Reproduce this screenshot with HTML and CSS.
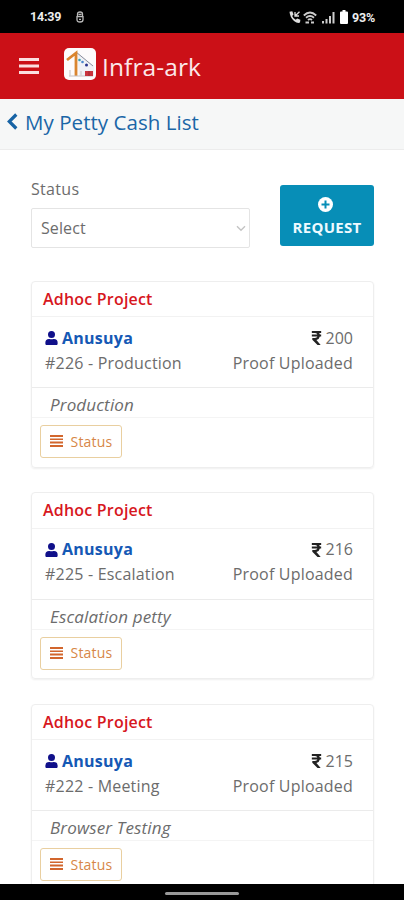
FILE: index.html
```
<!DOCTYPE html>
<html lang="en">
<head>
<meta charset="utf-8">
<title>Infra-ark</title>
<link rel="stylesheet" href="styles.css">
</head>
<body>
<svg width="0" height="0" class="defs">
  <symbol id="user" viewBox="0 0 448 512"><path d="M224 256a128 128 0 1 0 0-256 128 128 0 0 0 0 256zm90 32h-17a174 174 0 0 1-146 0h-17A134 134 0 0 0 0 422v42c0 27 21 48 48 48h352c27 0 48-21 48-48v-42a134 134 0 0 0-134-134z"/></symbol>
  <symbol id="rupee" viewBox="0 0 11 15"><path d="M.5 0h10v2.200H8.300q.6.700.8 1.600h1.400V6H9.100Q8.500 9 5.400 9.600L10 15H6.600L1 9.400V7.400h2.800Q6 7.400 6.500 6h-6V3.800h5.900Q5.700 2.200 3.800 2.200H.5z"/></symbol>
  <symbol id="bars" viewBox="0 0 13 12"><path d="M0 0h13v2H0zM0 3.400h13V5H0zM0 6.600h13v1.800H0zM0 10h13v2H0z"/></symbol>
</svg>
<div class="screen">
  <div class="statusbar">
    <span class="time">14:39</span>
    <svg class="notif" width="8" height="12" viewBox="0 0 8 12" fill="none" stroke="#bbb" stroke-width="1.300"><path d="M1.500 5.500V3q0-2 2.500-2t2.500 2v2.500M1 5.700h6v3Q7 11 4 11T1 8.700zM2.500 3.500h3M3 8.300h2"/></svg>
    <svg class="call" width="12" height="13" viewBox="0 0 12 13"><path fill="#ddd" d="M.5.8 3.300.3 4.500 3.500 3.200 5q1 2.500 3.500 3.700l1.500-1.300 3.200 1.300-.4 2.900Q8.500 12.700 5 10 1 6.500.5.800z"/><path d="M6 1v4h4M6.300 4.700 10.500.7" fill="none" stroke="#ddd" stroke-width="1.300"/></svg>
    <svg class="wifi" width="14" height="13" viewBox="0 0 14 13" fill="none" stroke="#ccc" stroke-width="1.800"><path d="M.8 4.500Q7-1.500 13.200 4.500M3 6.800q4-3.500 8 0M5 9q2-1.800 4 0M2.500 11.500H6M8 11.500h3"/></svg>
    <svg class="signal" width="13" height="13" viewBox="0 0 13 13" fill="#ccc"><path d="M0 10h2v2.500H0zM3.500 8h2v4.500h-2zM7 5h2v7.500H7zM10.500 1h2v11.500h-2z"/></svg>
    <svg class="battery" width="8" height="14" viewBox="0 0 8 14"><path fill="#fff" d="M2.500 0h3v1.500H7q1 0 1 1V13q0 1-1 1H1q-1 0-1-1V2.500q0-1 1-1h1.500z"/></svg>
    <span class="percent">93%</span>
  </div>
  <header class="topbar">
    <svg class="menu" width="20" height="16" viewBox="0 0 20 16" fill="#fbdfe0"><path d="M0 0h20v3H0zM0 6.500h20v3H0zM0 13h20v3H0z"/></svg>
    <svg class="logo" width="32" height="32" viewBox="0 0 32 32">
      <rect width="32" height="32" rx="5" fill="#fdfbfb"/>
      <path d="M13 4 30 18v10H15" fill="#f0f1f6"/>
      <path d="M12 4 29 18" stroke="#8b8e9b" stroke-width="1" fill="none"/>
      <path d="M3 12 12 5v23" fill="none" stroke="#da852f" stroke-width="2.800"/>
      <path d="M5 28h24" stroke="#c4c0c2" stroke-width="1"/>
      <path d="M6 22v6m11-5v5" stroke="#d5d1d1" stroke-width="1.400"/>
      <circle cx="15.500" cy="12" r="1.300" fill="#39a4b4"/><circle cx="18.500" cy="14" r="1.300" fill="#4a87ca"/><circle cx="22.500" cy="17" r="1.500" fill="#27338c"/>
      <path d="M21 23h8v5h-8z" fill="#c9343d"/><path d="M25 23v5" stroke="#a02b35"/>
    </svg>
    <span class="brand">Infra-ark</span>
  </header>
  <div class="titlebar">
    <svg width="11" height="17" viewBox="0 0 11 17"><path d="M9.300 1.500 2.300 8.500l7 7" fill="none" stroke="#1763a5" stroke-width="3.200"/></svg>
    <h1>My Petty Cash List</h1>
  </div>
  <main>
    <div class="filter">
      <div class="field">
        <label>Status</label>
        <div class="select"><span>Select</span><svg width="10" height="7" viewBox="0 0 10 7"><path d="m1 1.300 4 4 4-4" fill="none" stroke="#c4c4c4" stroke-width="1.400"/></svg></div>
      </div>
      <button class="request">
        <svg width="15" height="15" viewBox="0 0 15 15"><circle cx="7.500" cy="7.500" r="7.500" fill="#fff"/><path d="M7.500 3.500v8M3.500 7.500h8" stroke="#078eb7" stroke-width="2"/></svg>
        <span>REQUEST</span>
      </button>
    </div>
    <section class="card">
      <h2>Adhoc Project</h2>
      <div class="info">
        <div><div class="name"><svg><use href="#user"/></svg><b>Anusuya</b></div><div class="ref">#226 - Production</div></div>
        <div class="right"><div class="amount"><svg><use href="#rupee"/></svg><span>200</span></div><div class="proof">Proof Uploaded</div></div>
      </div>
      <p>Production</p>
      <div class="actions"><button class="status"><svg><use href="#bars"/></svg><span>Status</span></button></div>
    </section>
    <section class="card">
      <h2>Adhoc Project</h2>
      <div class="info">
        <div><div class="name"><svg><use href="#user"/></svg><b>Anusuya</b></div><div class="ref">#225 - Escalation</div></div>
        <div class="right"><div class="amount"><svg><use href="#rupee"/></svg><span>216</span></div><div class="proof">Proof Uploaded</div></div>
      </div>
      <p>Escalation petty</p>
      <div class="actions"><button class="status"><svg><use href="#bars"/></svg><span>Status</span></button></div>
    </section>
    <section class="card">
      <h2>Adhoc Project</h2>
      <div class="info">
        <div><div class="name"><svg><use href="#user"/></svg><b>Anusuya</b></div><div class="ref">#222 - Meeting</div></div>
        <div class="right"><div class="amount"><svg><use href="#rupee"/></svg><span>215</span></div><div class="proof">Proof Uploaded</div></div>
      </div>
      <p>Browser Testing</p>
      <div class="actions"><button class="status"><svg><use href="#bars"/></svg><span>Status</span></button></div>
    </section>
  </main>
  <footer><i></i></footer>
</div>
</body>
</html>
```
FILE: styles.css
```
* { box-sizing: border-box; }
body { margin: 0; font-family: "Open Sans", "Noto Sans", sans-serif; color: #6c6c6c; background: #fff; }
h1, h2, p { margin: 0; font-weight: 400; }
button { font-family: inherit; padding: 0; }
svg { display: block; flex: none; }
.defs { position: absolute; }
.screen { width: 404px; height: 900px; display: flex; flex-direction: column; overflow: hidden; }
.statusbar { height: 33px; flex: none; background: #000; color: #eee; display: flex; align-items: center; padding: 1px 0 0 30px; font: 700 12.500px/16px Roboto, sans-serif; }
.time { width: 46px; letter-spacing: -.2px; }
.call { margin-left: 205px; }
.wifi { margin-left: 2px; }
.signal { margin-left: 5px; }
.battery { margin-left: 5px; }
.percent { margin: 1px 0 0 4px; letter-spacing: -.2px; }
.topbar { height: 65.500px; flex: none; background: #cb1017; display: flex; align-items: center; padding-left: 19px; }
.menu { margin-top: 1px; }
.logo { margin: -4px 0 0 25px; }
.brand { color: #fbe8e9; font-size: 24.500px; line-height: 34px; margin: 3px 0 0 6px; letter-spacing: .1px; }
.titlebar { height: 51px; flex: none; background: #f6f7f7; border-bottom: 1px solid #ececec; display: flex; align-items: center; padding: 0 0 5px 7px; color: #1a66a7; }
h1 { font-size: 20.500px; line-height: 28px; margin: 2px 0 0 7px; letter-spacing: .05px; }
main { flex: 1; min-height: 0; overflow: hidden; padding: 27.500px 30px 0 31px; }
.filter { display: flex; justify-content: space-between; height: 103.500px; }
label { display: block; font-size: 16px; line-height: 24px; letter-spacing: .3px; }
.select { width: 219px; height: 40px; margin-top: 7px; border: 1px solid #e4e4e4; border-radius: 2px; display: flex; align-items: center; justify-content: space-between; padding: 0 3px 0 9px; font-size: 16px; letter-spacing: .1px; }
.request { width: 94px; height: 61px; margin-top: 8px; border: 0; border-radius: 3px; background: #078eb7; color: #effaff; display: flex; flex-direction: column; align-items: center; padding-top: 11.500px; font-size: 15px; line-height: 20px; font-weight: 700; letter-spacing: .3px; }
.request span { margin-top: 5px; }
.request svg { margin-right: 3px; }
.card { height: 187px; margin-bottom: 24.500px; border: 1px solid #eee; border-radius: 4px; box-shadow: 0 1px 2px #0001; }
h2 { height: 35.500px; border-bottom: 1px solid #f2f2f2; color: #d7171e; font-size: 16px; line-height: 35px; font-weight: 600; padding-left: 11px; letter-spacing: .2px; }
.info { height: 71px; border-bottom: 1px solid #ebebeb; display: flex; justify-content: space-between; padding: 8.700px 20px 0 13px; font-size: 16px; line-height: 25px; }
.ref, .proof { letter-spacing: .2px; }
.name, .amount { display: flex; align-items: center; }
.name { color: #1559b5; }
.name svg { width: 13px; height: 14px; margin-right: 4px; fill: #10108a; }
.name b { font-weight: 700; letter-spacing: .25px; }
.amount { justify-content: flex-end; }
.amount svg { width: 11px; height: 14px; margin-right: 4px; fill: #222; }
.right { text-align: right; }
.card p { height: 30px; border-bottom: 1px solid #f4f4f4; padding: 3px 0 0 18px; font-size: 17px; line-height: 28px; font-style: italic; letter-spacing: .15px; }
.actions { padding: 7.200px 0 0 8px; }
.status { width: 82px; height: 33px; border: 1px solid #e9cfa0; border-radius: 3px; background: #fff; color: #d78747; display: flex; align-items: center; padding: 0 0 1px 9px; font-size: 14px; letter-spacing: .2px; }
.status svg { width: 13px; height: 12px; margin-right: 7.500px; fill: #d2662d; }
footer { height: 16px; flex: none; background: #000; display: flex; justify-content: center; padding-top: 7.500px; }
footer i { width: 74px; height: 3px; border-radius: 2px; background: #999; }
```
